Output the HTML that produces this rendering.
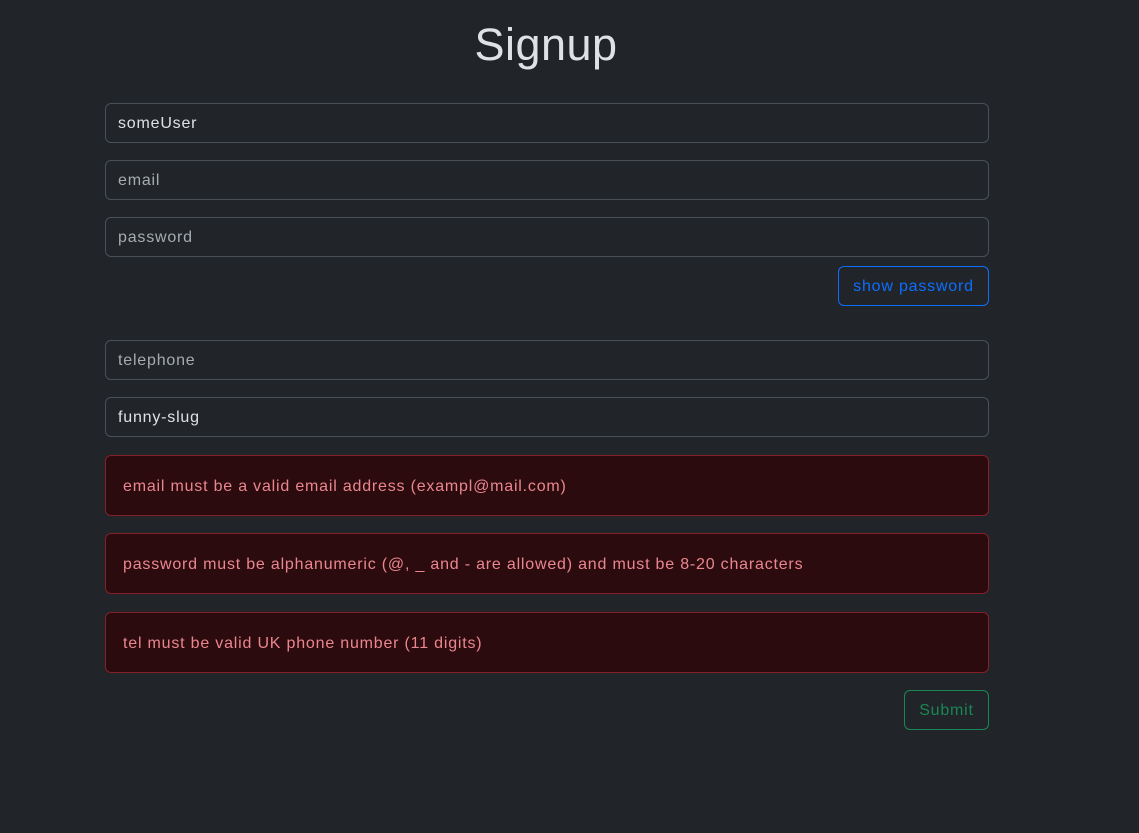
<!DOCTYPE html>
<html><head><meta charset="utf-8"><style>
*{box-sizing:border-box}
body{margin:0;background:#212529;color:#dee2e6;font-family:"Liberation Sans","DejaVu Sans",sans-serif;font-size:16px;letter-spacing:0.8px;width:1139px;height:833px;overflow:hidden;position:relative}
h1{position:absolute;top:19px;left:0;width:1092px;text-align:center;margin:0;font-weight:400;font-size:45px;letter-spacing:0.5px;line-height:52px;color:#dee2e6}
.in{position:absolute;left:105px;width:884px;height:40px;border:1px solid #495057;border-radius:6px;padding:0 12px;line-height:40px;color:#a7acb1}
.in.v{color:#dee2e6}
.al{position:absolute;left:105px;width:884px;height:61px;border:1px solid #842029;background:#2c0b0e;border-radius:6px;color:#ea868f;padding:0 17px;line-height:61px}
.btn{position:absolute;border-radius:6px;height:40px;line-height:40px;text-align:center}
</style></head><body>
<h1>Signup</h1>
<div class="in v" style="top:103px">someUser</div>
<div class="in" style="top:160px">email</div>
<div class="in" style="top:217px">password</div>
<div class="btn" style="left:838px;top:266px;width:151px;border:1px solid #0d6efd;color:#0d6efd">show password</div>
<div class="in" style="top:340px">telephone</div>
<div class="in v" style="top:397px">funny-slug</div>
<div class="al" style="top:455px">email must be a valid email address (exampl@mail.com)</div>
<div class="al" style="top:533px">password must be alphanumeric (@, _ and - are allowed) and must be 8-20 characters</div>
<div class="al" style="top:612px">tel must be valid UK phone number (11 digits)</div>
<div class="btn" style="left:904px;top:690px;width:85px;border:1px solid #198754;color:#198754">Submit</div>
</body></html>
